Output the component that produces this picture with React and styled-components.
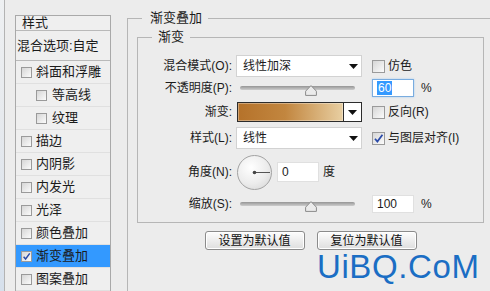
import styled, { createGlobalStyle } from "styled-components";

const font = `"Liberation Sans", "Noto Sans CJK SC", sans-serif`;

const Global = createGlobalStyle`
  html, body { margin: 0; padding: 0; background: #ececec; }
  body { font-family: ${font}; color: #1b1b1b; }
`;

const Screen = styled.div`
  position: relative;
  display: flex;
  width: 490px;
  height: 291px;
  overflow: hidden;
  background: #ececec;
`;

const EdgeStrip = styled.div`
  flex: none;
  width: 4px;
  background: linear-gradient(#eef0f2 0%, #e7eaee 40%, #d6e0ec 100%);
  border-right: 1px solid #b3b3b3;
`;

const StyleList = styled.div`
  flex: none;
  width: 96px;
  margin: 15px 0 0 10px;
  border: 1px solid #a9a9a9;
  border-bottom: none;
  background: #efefef;
  box-sizing: border-box;
`;

const ListHead = styled.div`
  height: 14px;
  line-height: 14px;
  padding-left: 6px;
  font-size: 13px;
  border-bottom: 1px solid #b9b9b9;
`;

const BlendRow = styled.div`
  height: 29px;
  line-height: 29px;
  padding-left: 1px;
  font-size: 13px;
  white-space: nowrap;
  border-bottom: 1px solid #b9b9b9;
`;

const Item = styled.div`
  display: flex;
  align-items: center;
  gap: ${(p) => (p.$indent ? 5 : 4)}px;
  height: 22px;
  padding-left: ${(p) => (p.$indent ? 20 : 5)}px;
  font-size: 13px;
  line-height: 16px;
  white-space: nowrap;
  border-bottom: 1px solid #e0e0e0;
  background: ${(p) => (p.$active ? "#3399ff" : "transparent")};
`;

const Box = styled.span`
  flex: none;
  display: inline-flex;
  align-items: center;
  justify-content: center;
  width: ${(p) => p.$size}px;
  height: ${(p) => p.$size}px;
  box-sizing: border-box;
  border: 1px solid #9a9a9a;
  background: linear-gradient(135deg, #d6d6d6, #fbfbfb);
`;

function Check({ size = 11, checked }) {
  return (
    <Box $size={size}>
      {checked && (
        <svg width={size - 2} height={size - 2} viewBox="0 0 10 10">
          <path d="M1.8 5.2 L4 7.8 L8.6 1.6" fill="none" stroke="#2a4aa8" strokeWidth="1.6" />
        </svg>
      )}
    </Box>
  );
}

const Editor = styled.div`
  flex: none;
  margin-left: 16px;
`;

const OuterSet = styled.fieldset`
  margin: 10px 0 0 0;
  padding: 3px 0 0 9px;
  width: 390px;
  height: 420px;
  box-sizing: border-box;
  border: 1px solid #b6b6b6;
  min-width: 0;
`;

const Legend = styled.legend`
  margin-left: ${(p) => p.$ml}px;
  padding: 0 6px 0 ${(p) => p.$pl}px;
  font-size: 13px;
  line-height: 16px;
`;

const InnerSet = styled.fieldset`
  margin: 0;
  padding: 10px 0 8px 0;
  width: 347px;
  box-sizing: border-box;
  border: 1px solid #b6b6b6;
  min-width: 0;
`;

const Row = styled.div`
  display: flex;
  align-items: center;
  height: ${(p) => p.$h}px;
  margin-top: ${(p) => p.$mt || 0}px;
  font-size: 12px;
`;

const Label = styled.div`
  flex: none;
  width: 98px;
  padding-right: 4px;
  box-sizing: border-box;
  text-align: right;
  white-space: nowrap;
  line-height: 16px;
`;

const Control = styled.div`
  flex: none;
  display: flex;
  align-items: center;
  width: 126px;
  height: 100%;
`;

const Side = styled.div`
  display: flex;
  align-items: center;
  gap: 3px;
  margin-left: 9px;
  padding-left: 1px;
  white-space: nowrap;
  line-height: 16px;
`;

const Select = styled.div`
  display: flex;
  align-items: center;
  justify-content: space-between;
  width: 126px;
  height: 22px;
  padding: 0 3px 0 6px;
  box-sizing: border-box;
  background: #fff;
  border: 1px solid #d2d2d2;
  line-height: 16px;
`;

const Arrow = () => (
  <svg width="9" height="5" viewBox="0 0 9 5">
    <path d="M0 0 H9 L4.5 5 Z" fill="#111" />
  </svg>
);

const Track = styled.div`
  position: relative;
  width: 115px;
  height: 4px;
  margin-left: 4px;
  border-radius: 2px;
  background: linear-gradient(#959595, #cdcdcd);
`;

const Thumb = styled.svg`
  position: absolute;
  left: ${(p) => p.$at}px;
  top: -1px;
`;

function Slider({ at }) {
  return (
    <Track>
      <Thumb $at={at} width="12" height="11" viewBox="0 0 12 11">
        <path d="M6 0.6 L11.4 6.2 V10.4 H0.6 V6.2 Z" fill="#ebebeb" stroke="#8a8a8a" strokeWidth="1" />
      </Thumb>
    </Track>
  );
}

const Field = styled.div`
  display: flex;
  align-items: center;
  width: 42px;
  height: ${(p) => p.$h || 18}px;
  padding-left: 4px;
  box-sizing: border-box;
  background: #fff;
  border: 1px solid ${(p) => (p.$focus ? "#79acdf" : "#e0e0e0")};
  box-shadow: ${(p) => (p.$focus ? "0 0 2px #a9cdf1" : "none")};
  line-height: 14px;
`;

const Selected = styled.span`
  background: #3399ff;
  color: #fff;
  padding: 0 1px;
`;

const GradientPick = styled.div`
  display: flex;
  width: 125px;
  height: 20px;
  margin-left: 1px;
  box-sizing: border-box;
  border: 1px solid #2c2c2c;
`;

const GradientFill = styled.div`
  flex: 1;
  background: linear-gradient(to right, #b5722a 0%, #c2863f 45%, #e8cfa2 100%);
  box-shadow: inset 0 0 0 1px rgba(255, 255, 255, 0.35);
`;

const PickButton = styled.div`
  flex: none;
  display: flex;
  align-items: center;
  justify-content: center;
  width: 17px;
  background: #fff;
  border-left: 1px solid #2c2c2c;
`;

const Dial = styled.div`
  flex: none;
  width: 35px;
  height: 35px;
  margin-left: 1px;
  margin-right: 5px;
  border-radius: 50%;
  border: 1px solid #a3a3a3;
  box-sizing: border-box;
  background: radial-gradient(circle at 40% 35%, #ffffff, #ececec 55%, #d2d2d2);
`;

const Unit = styled.span`
  margin-left: 4px;
  line-height: 16px;
`;

const ButtonBar = styled.div`
  display: flex;
  justify-content: center;
  gap: 12px;
  width: 347px;
  margin-top: 8px;
`;

const Button = styled.button`
  width: 100px;
  height: 19px;
  padding: 0;
  font-family: ${font};
  font-size: 12px;
  line-height: 16px;
  color: #111;
  border: 1px solid #8b8b8b;
  border-radius: 3px;
  background: linear-gradient(#fdfdfd, #dedede);
  box-shadow: inset 0 0 0 1px #fff;
`;

const Watermark = styled.div`
  position: absolute;
  left: 317px;
  top: 250px;
  font-family: "Liberation Sans", sans-serif;
  font-size: 33px;
  line-height: 33px;
  letter-spacing: 0.6px;
  color: #1b6ec4;
  white-space: nowrap;
`;

const effects = [
  { name: "斜面和浮雕" },
  { name: "等高线", indent: true },
  { name: "纹理", indent: true },
  { name: "描边" },
  { name: "内阴影" },
  { name: "内发光" },
  { name: "光泽" },
  { name: "颜色叠加" },
  { name: "渐变叠加", checked: true, active: true },
  { name: "图案叠加" },
];

export default function App() {
  return (
    <Screen>
      <Global />
      <EdgeStrip />
      <StyleList>
        <ListHead>样式</ListHead>
        <BlendRow>混合选项:自定</BlendRow>
        {effects.map((e) => (
          <Item key={e.name} $indent={e.indent} $active={e.active}>
            <Check checked={e.checked} />
            {e.name}
          </Item>
        ))}
      </StyleList>

      <Editor>
        <OuterSet>
          <Legend $ml={5} $pl={8}>渐变叠加</Legend>
          <InnerSet>
            <Legend $ml={14} $pl={6}>渐变</Legend>

            <Row $h={22}>
              <Label>混合模式(O):</Label>
              <Control>
                <Select>
                  线性加深
                  <Arrow />
                </Select>
              </Control>
              <Side>
                <Check size={13} />
                仿色
              </Side>
            </Row>

            <Row $h={20} $mt={1}>
              <Label>不透明度(P):</Label>
              <Control>
                <Slider at={65} />
              </Control>
              <Side>
                <Field $focus>
                  <Selected>60</Selected>
                </Field>
                <Unit>%</Unit>
              </Side>
            </Row>

            <Row $h={20} $mt={4}>
              <Label>渐变:</Label>
              <Control>
                <GradientPick>
                  <GradientFill />
                  <PickButton>
                    <Arrow />
                  </PickButton>
                </GradientPick>
              </Control>
              <Side>
                <Check size={13} />
                反向(R)
              </Side>
            </Row>

            <Row $h={22} $mt={5}>
              <Label>样式(L):</Label>
              <Control>
                <Select>
                  线性
                  <Arrow />
                </Select>
              </Control>
              <Side>
                <Check size={13} checked />
                与图层对齐(I)
              </Side>
            </Row>

            <Row $h={36} $mt={5}>
              <Label>角度(N):</Label>
              <Control>
                <Dial>
                  <svg width="33" height="33" viewBox="0 0 33 33">
                    <line x1="16.5" y1="16.5" x2="32" y2="16.5" stroke="#555" strokeWidth="1" />
                    <circle cx="16.5" cy="16.5" r="1.8" fill="#444" />
                  </svg>
                </Dial>
                <Field $h={20}>0</Field>
                <Unit>度</Unit>
              </Control>
            </Row>

            <Row $h={20} $mt={4}>
              <Label>缩放(S):</Label>
              <Control>
                <Slider at={65} />
              </Control>
              <Side>
                <Field>100</Field>
                <Unit>%</Unit>
              </Side>
            </Row>
          </InnerSet>

          <ButtonBar>
            <Button>设置为默认值</Button>
            <Button>复位为默认值</Button>
          </ButtonBar>
        </OuterSet>
      </Editor>

      <Watermark>UiBQ.CoM</Watermark>
    </Screen>
  );
}
